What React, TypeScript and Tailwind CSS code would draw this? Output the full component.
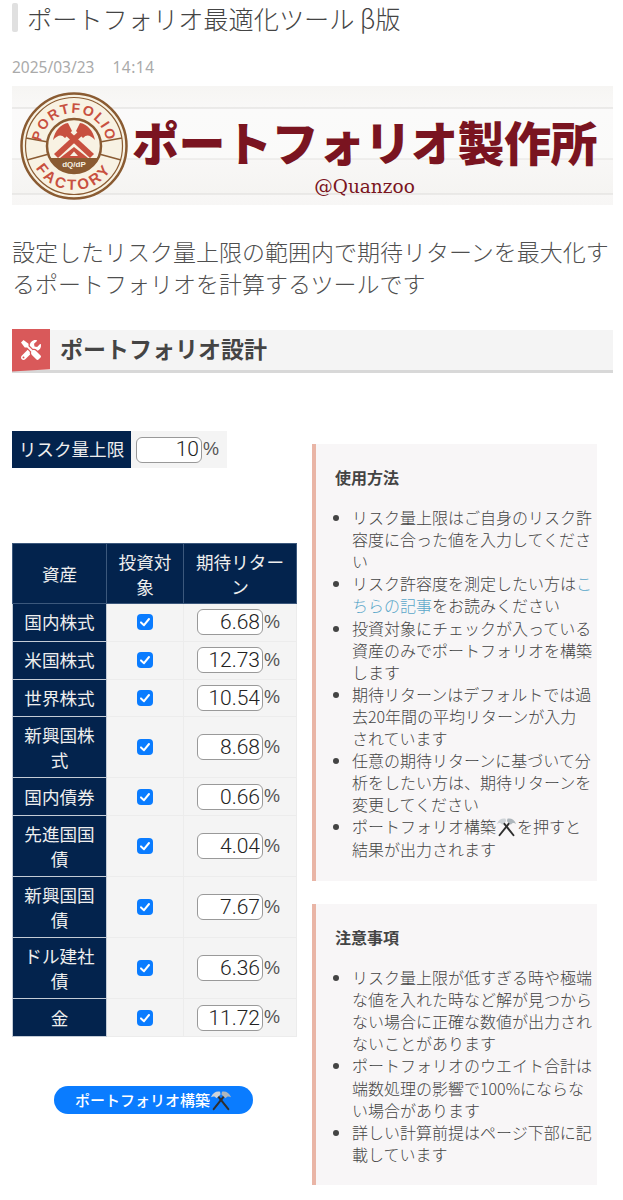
import { FaTools } from 'react-icons/fa'

const assets = [
  { name: '国内株式', value: '6.68' },
  { name: '米国株式', value: '12.73' },
  { name: '世界株式', value: '10.54' },
  { name: '新興国株式', value: '8.68' },
  { name: '国内債券', value: '0.66' },
  { name: '先進国国債', value: '4.04' },
  { name: '新興国国債', value: '7.67' },
  { name: 'ドル建社債', value: '6.36' },
  { name: '金', value: '11.72' },
]

const notes = [
  'リスク量上限が低すぎる時や極端な値を入れた時など解が見つからない場合に正確な数値が出力されないことがあります',
  'ポートフォリオのウエイト合計は端数処理の影響で100%にならない場合があります',
  '詳しい計算前提はページ下部に記載しています',
]

function Hammers({ className }: { className?: string }) {
  return (
    <svg viewBox="0 0 24 24" className={className}>
      <path d="M4 22 L16 7" stroke="#2f2f2f" strokeWidth="2.2" strokeLinecap="round" />
      <path d="M20 22 L8 7" stroke="#2f2f2f" strokeWidth="2.2" strokeLinecap="round" />
      <path d="M13 3 C17 2 21 4 23 9 C20 7.5 18.5 8 17 10 L12.5 6 Z" fill="#aeb6bc" />
      <path d="M11 3 C7 2 3 4 1 9 C4 7.5 5.5 8 7 10 L11.5 6 Z" fill="#cfd4d8" />
    </svg>
  )
}

function Logo() {
  return (
    <svg viewBox="0 0 108 108" className="h-[108px] w-[108px] shrink-0">
      <defs>
        <path id="arcTop" d="M 21 54 A 33 33 0 0 1 87 54" />
        <path id="arcBottom" d="M 10 54 A 44 44 0 0 0 98 54" />
        <clipPath id="inner">
          <circle cx="54" cy="54" r="27" />
        </clipPath>
      </defs>
      <circle cx="54" cy="54" r="52.5" fill="#f8f2e3" stroke="#8a5b32" strokeWidth="2.5" />
      <circle cx="54" cy="54" r="48.5" fill="none" stroke="#8a5b32" strokeWidth="1.2" />
      <g stroke="#8a5b32" strokeWidth="1.6">
        <path d="M6 46 L28 50" />
        <path d="M7 68 L29 62" />
        <path d="M102 46 L80 50" />
        <path d="M101 68 L79 62" />
      </g>
      <circle cx="54" cy="54" r="27" fill="#f8f2e3" stroke="#8a5b32" strokeWidth="2.5" />
      <rect x="27" y="66" width="54" height="16" fill="#8a5b32" clipPath="url(#inner)" />
      <g fill="#c8503f">
        <path d="M38 66 L34 62 L60 38 L64 42 Z" />
        <path d="M70 66 L74 62 L48 38 L44 42 Z" />
        <path d="M60 31 C67 32 73 38 75 48 C70 43 67 42 63 46 L56 39 Z" />
        <path d="M48 31 C41 32 35 38 33 48 C38 43 41 42 45 46 L52 39 Z" />
        <path d="M40 66 L54 55 L68 66 Z" />
      </g>
      <path d="M50 64 L54 59.5 L58 64 Z" fill="#f8f2e3" />
      <text x="54" y="75" textAnchor="middle" fill="#f8f2e3" fontSize="8" fontWeight="700" fontFamily="Liberation Sans, sans-serif">
        dQ/dP
      </text>
      <text fill="#c8503f" fontSize="14" fontWeight="700" fontFamily="Liberation Sans, sans-serif" letterSpacing="1.5">
        <textPath href="#arcTop" startOffset="50%" textAnchor="middle">PORTFOLIO</textPath>
      </text>
      <text fill="#c8503f" fontSize="15" fontWeight="700" fontFamily="Liberation Sans, sans-serif" letterSpacing="3">
        <textPath href="#arcBottom" startOffset="50%" textAnchor="middle">FACTORY</textPath>
      </text>
    </svg>
  )
}

function Banner() {
  return (
    <div className="flex h-[119px] items-center bg-[linear-gradient(180deg,#f6f5f3_0px,#f9f8f7_21px,#dcdbd9_22px,#fbfafa_23px,#fafaf9_72px,#e4e3e1_73px,#f8f7f6_74px,#f5f4f2_107px,#dddcda_108px,#f8f7f6_109px,#f7f6f5_119px)] pl-2">
      <Logo />
      <div className="ml-1 flex flex-col items-center">
        <div className="mt-[18px] whitespace-nowrap text-[47px] leading-[62px] font-black tracking-[-0.5px] text-[#7a1420]">
          ポートフォリオ製作所
        </div>
        <div className="mt-[3px] text-[18.5px] leading-6 text-[#7a1420] font-['DejaVu_Serif',serif]">@Quanzoo</div>
      </div>
    </div>
  )
}

function PercentInput({ value }: { value: string }) {
  return (
    <span className="flex items-center">
      <input
        readOnly
        value={value}
        className="h-[26px] w-[66px] rounded-md border border-[#999] bg-white pr-[2px] text-right text-[21px] font-light text-[#222] outline-none font-['Roboto',sans-serif]"
      />
      <span className="ml-[1px] text-[18px] text-[#555] font-['Liberation_Sans',sans-serif]">%</span>
    </span>
  )
}

function Checked() {
  return (
    <span className="flex h-4 w-4 items-center justify-center rounded-[4px] bg-[#0a7cff]">
      <svg viewBox="0 0 16 16" className="h-4 w-4">
        <path d="M4 8.4 L7 11.2 L12 5" fill="none" stroke="white" strokeWidth="2" strokeLinecap="round" strokeLinejoin="round" />
      </svg>
    </span>
  )
}

export default function App() {
  return (
    <main className="min-h-[1200px] bg-white px-3 text-[#444] font-['Noto_Sans_CJK_JP',sans-serif]">
      {/* title */}
      <div className="flex items-start pt-[3px]">
        <span className="h-[29px] w-[6px] rounded-[2px] bg-[#e0e0e0]" />
        <h1 className="ml-[9px] -mt-[2px] text-[25.2px] leading-[34px] font-light whitespace-nowrap">ポートフォリオ最適化ツール β版</h1>
      </div>
      <div className="mt-[22px] mb-[9px] text-[15.5px] leading-5 text-[#aaa] font-['Noto_Sans',sans-serif]">
        2025/03/23<span className="ml-[18px] tracking-[0.5px]">14:14</span>
      </div>

      <div className="w-[601px]">
        <Banner />
      </div>

      <p className="mt-[30px] w-[601px] text-[23px] leading-[32px] font-light text-[#4f4f4f]">
        設定したリスク量上限の範囲内で期待リターンを最大化するポートフォリオを計算するツールです
      </p>

      {/* section heading */}
      <div className="mt-[31px] flex h-[43px] w-[601px] items-center border-b-[3px] border-[#d8d8d8] bg-[#f4f4f4]">
        <span className="flex h-[43px] w-[38px] shrink-0 items-center justify-center bg-[#d9595a] [clip-path:polygon(0_0,100%_0,100%_95%,0_100%)]">
          <FaTools className="h-[20px] w-[20px] text-white" />
        </span>
        <h2 className="ml-[10px] pb-1 text-[23px] font-bold text-[#444]">ポートフォリオ設計</h2>
      </div>

      <div className="mt-[58px] flex items-start gap-4">
        {/* left column */}
        <div className="w-[284px] shrink-0">
          <div className="flex h-[37px] w-[215px] items-center bg-[#f4f4f4]">
            <div className="flex h-[37px] w-[119px] items-center justify-center bg-[#03234d] pb-px text-[17.6px] text-[#eee]">
              リスク量上限
            </div>
            <div className="ml-[5px]">
              <PercentInput value="10" />
            </div>
          </div>

          <table className="mt-[75px] w-[284px] table-fixed border-collapse text-[17.6px] leading-[25px]">
            <colgroup>
              <col className="w-[94px]" />
              <col className="w-[77px]" />
              <col className="w-[113px]" />
            </colgroup>
            <thead>
              <tr className="h-[60px] bg-[#03234d] text-[#eee]">
                <th className="border border-[#3c587c] px-2 font-normal">資産</th>
                <th className="border border-[#3c587c] px-2 font-normal">投資対象</th>
                <th className="border border-[#3c587c] px-2 font-normal">期待リターン</th>
              </tr>
            </thead>
            <tbody>
              {assets.map((a) => (
                <tr key={a.name} className={a.name.length > 4 ? 'h-[61px]' : 'h-[37.8px]'}>
                  <td className="border border-[#c4ccd6] bg-[#03234d] px-2 pb-px text-center text-[#eee]">{a.name}</td>
                  <td className="border border-[#ececec] bg-[#f4f4f4]">
                    <div className="flex justify-center pr-px">
                      <Checked />
                    </div>
                  </td>
                  <td className="border border-[#ececec] bg-[#f4f4f4] pl-[13px]">
                    <PercentInput value={a.value} />
                  </td>
                </tr>
              ))}
            </tbody>
          </table>

          <div className="mt-[49px] flex justify-center pr-[1px]">
            <button className="flex h-[28px] w-[199px] items-center justify-center rounded-full bg-[#0a7cff] text-[15px] font-medium text-white">
              ポートフォリオ構築
              <Hammers className="h-[22px] w-[22px]" />
            </button>
          </div>
        </div>

        {/* right column */}
        <div className="mt-[13px] w-[285px] shrink-0 text-[16px] leading-[22.1px]">
          <section className="h-[437px] border-l-4 border-[#e9b5a6] bg-[#f8f6f7] pt-[22px] pl-[19px]">
            <h3 className="font-bold">使用方法</h3>
            <ul className="mt-[18px] w-[258px] list-disc pl-[17px] font-light marker:text-[#444]">
              <li>リスク量上限はご自身のリスク許容度に合った値を入力してください</li>
              <li>
                リスク許容度を測定したい方は<span className="text-[#5aa7c9]">こちらの記事</span>をお読みください
              </li>
              <li>投資対象にチェックが入っている資産のみでポートフォリオを構築します</li>
              <li>
                期待リターンはデフォルトでは過去20年間の平均リターンが入力
                <br />
                されています
              </li>
              <li>任意の期待リターンに基づいて分析をしたい方は、期待リターンを変更してください</li>
              <li>
                ポートフォリオ構築
                <Hammers className="inline h-[21px] w-[21px] align-[-4px]" />
                を押すと結果が出力されます
              </li>
            </ul>
          </section>

          <section className="mt-[23px] h-[281px] border-l-4 border-[#e9b5a6] bg-[#f8f6f7] pt-[22px] pl-[19px]">
            <h3 className="font-bold">注意事項</h3>
            <ul className="mt-[18px] w-[258px] list-disc pl-[17px] font-light marker:text-[#444]">
              {notes.map((n) => (
                <li key={n}>{n}</li>
              ))}
            </ul>
          </section>
        </div>
      </div>
    </main>
  )
}
